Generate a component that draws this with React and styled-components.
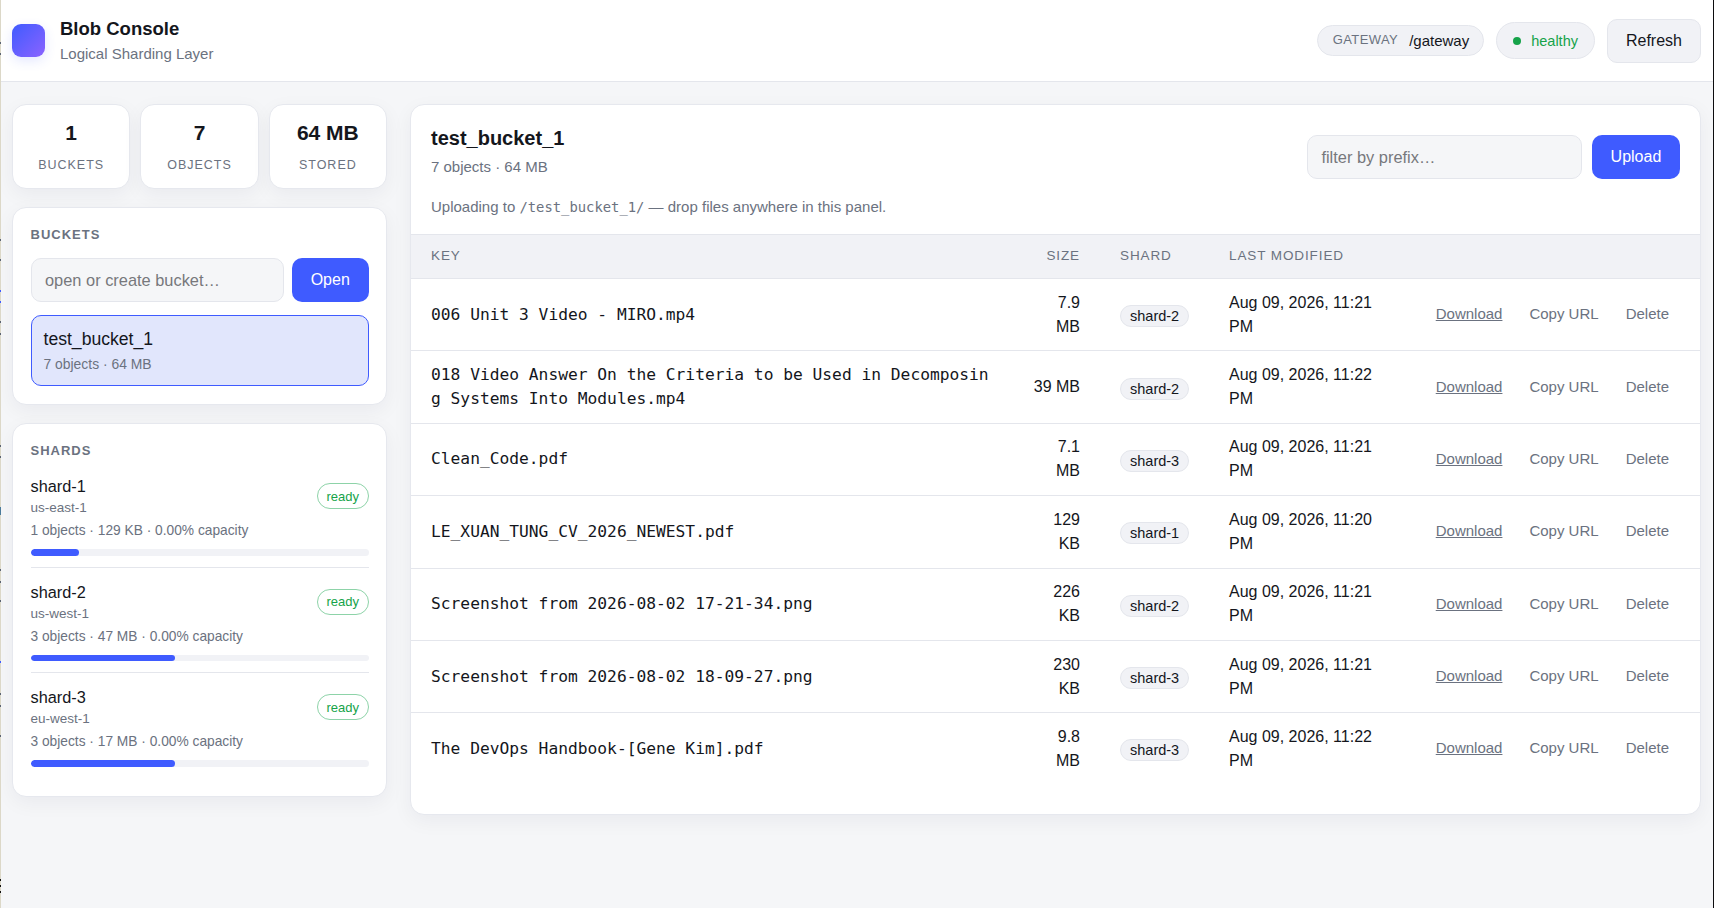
import React from 'react';
import styled, { createGlobalStyle } from 'styled-components';

const GlobalStyle = createGlobalStyle`
  * { box-sizing: border-box; }
  html, body { margin: 0; padding: 0; }
  body {
    background: #f5f6f8;
    color: #14161c;
    font-family: "Liberation Sans", Arial, sans-serif;
    font-size: 15px;
    min-height: 908px;
    overflow: hidden;
  }
`;

const shards = [
  { name: 'shard-1', region: 'us-east-1', meta: '1 objects · 129 KB · 0.00% capacity', pct: 14.4 },
  { name: 'shard-2', region: 'us-west-1', meta: '3 objects · 47 MB · 0.00% capacity', pct: 42.8 },
  { name: 'shard-3', region: 'eu-west-1', meta: '3 objects · 17 MB · 0.00% capacity', pct: 42.8 },
];

const objects = [
  { key: '006 Unit 3 Video - MIRO.mp4', size: '7.9 MB', shard: 'shard-2', date: 'Aug 09, 2026, 11:21 PM' },
  { key: '018 Video Answer On the Criteria to be Used in Decomposing Systems Into Modules.mp4', size: '39 MB', shard: 'shard-2', date: 'Aug 09, 2026, 11:22 PM' },
  { key: 'Clean_Code.pdf', size: '7.1 MB', shard: 'shard-3', date: 'Aug 09, 2026, 11:21 PM' },
  { key: 'LE_XUAN_TUNG_CV_2026_NEWEST.pdf', size: '129 KB', shard: 'shard-1', date: 'Aug 09, 2026, 11:20 PM' },
  { key: 'Screenshot from 2026-08-02 17-21-34.png', size: '226 KB', shard: 'shard-2', date: 'Aug 09, 2026, 11:21 PM' },
  { key: 'Screenshot from 2026-08-02 18-09-27.png', size: '230 KB', shard: 'shard-3', date: 'Aug 09, 2026, 11:21 PM' },
  { key: 'The DevOps Handbook-[Gene Kim].pdf', size: '9.8 MB', shard: 'shard-3', date: 'Aug 09, 2026, 11:22 PM' },
];

// bits of the window behind that show along the left edge of the capture
const edgeTicks = [
  { y: 42, c: '#5b6472' }, { y: 53, c: '#5b6472' }, { y: 239, c: '#5b6472' }, { y: 259, c: '#5b6472' },
  { y: 290, c: '#3f5bff' }, { y: 301, c: '#3f5bff' }, { y: 321, c: '#5b6472' }, { y: 333, c: '#5b6472' },
  { y: 445, c: '#5b6472' }, { y: 456, c: '#5b6472' }, { y: 507, c: '#4a7a9a', h: 8 }, { y: 569, c: '#5b6472' },
  { y: 581, c: '#5b6472' }, { y: 600, c: '#5b6472' }, { y: 661, c: '#3f5bff' }, { y: 693, c: '#5b6472' },
  { y: 705, c: '#5b6472' }, { y: 735, c: '#5b6472' }, { y: 879, c: '#111', h: 2 }, { y: 885, c: '#111', h: 2 },
  { y: 891, c: '#111', h: 2 },
];

const App = () => (
  <>
    <GlobalStyle />
    <Header>
      <Brand>
        <Logo />
        <div>
          <BrandName>Blob Console</BrandName>
          <BrandSub>Logical Sharding Layer</BrandSub>
        </div>
      </Brand>
      <HeaderRight>
        <GatewayPill>
          <GatewayLabel>GATEWAY</GatewayLabel>
          <span>/gateway</span>
        </GatewayPill>
        <StatusPill>
          <Dot />
          healthy
        </StatusPill>
        <GhostButton>Refresh</GhostButton>
      </HeaderRight>
    </Header>
    <Page>
      <Sidebar>
        <Stats>
          <Stat><StatValue>1</StatValue><StatLabel>BUCKETS</StatLabel></Stat>
          <Stat><StatValue>7</StatValue><StatLabel>OBJECTS</StatLabel></Stat>
          <Stat><StatValue>64 MB</StatValue><StatLabel>STORED</StatLabel></Stat>
        </Stats>
        <BucketsCard>
          <CardTitle>BUCKETS</CardTitle>
          <InputRow>
            <TextInput placeholder="open or create bucket…" />
            <PrimaryButton>Open</PrimaryButton>
          </InputRow>
          <BucketItem>
            <BucketName>test_bucket_1</BucketName>
            <BucketMeta>7 objects · 64 MB</BucketMeta>
          </BucketItem>
        </BucketsCard>
        <Card>
          <ShardsTitle>SHARDS</ShardsTitle>
          {shards.map((s, i) => (
            <Shard key={s.name} $last={i === shards.length - 1}>
              <ShardTop>
                <div>
                  <ShardName>{s.name}</ShardName>
                  <ShardRegion>{s.region}</ShardRegion>
                </div>
                <ReadyBadge>ready</ReadyBadge>
              </ShardTop>
              <ShardMeta>{s.meta}</ShardMeta>
              <Track>
                <Fill style={{ width: `${s.pct}%` }} />
              </Track>
            </Shard>
          ))}
        </Card>
      </Sidebar>
      <Main>
        <MainHead>
          <MainTop>
            <div>
              <MainTitle>test_bucket_1</MainTitle>
              <MainSub>7 objects · 64 MB</MainSub>
            </div>
            <MainTools>
              <FilterInput placeholder="filter by prefix…" />
              <PrimaryButton>Upload</PrimaryButton>
            </MainTools>
          </MainTop>
          <Hint>
            Uploading to <HintCode>/test_bucket_1/</HintCode> — drop files anywhere in this panel.
          </Hint>
        </MainHead>
        <Table>
          <thead>
            <tr>
              <Th $width="599px">KEY</Th>
              <Th $width="90px" $right>SIZE</Th>
              <Th $width="109px">SHARD</Th>
              <Th $width="200px">LAST MODIFIED</Th>
              <Th />
            </tr>
          </thead>
          <tbody>
            {objects.map((o, i) => {
              const last = i === objects.length - 1;
              return (
                <tr key={o.key}>
                  <KeyCell $last={last}>{o.key}</KeyCell>
                  <SizeCell $last={last}>{o.size}</SizeCell>
                  <Td $last={last}><ShardTag>{o.shard}</ShardTag></Td>
                  <Td $last={last}>{o.date}</Td>
                  <ActionsCell $last={last}>
                    <Actions>
                      <ActionLink>Download</ActionLink>
                      <ActionButton>Copy URL</ActionButton>
                      <ActionButton>Delete</ActionButton>
                    </Actions>
                  </ActionsCell>
                </tr>
              );
            })}
          </tbody>
        </Table>
      </Main>
    </Page>
    <LeftEdge>
      {edgeTicks.map(t => (
        <EdgeTick key={t.y} $y={t.y} $color={t.c} $h={t.h} />
      ))}
    </LeftEdge>
    <RightEdge />
  </>
);

const LeftEdge = styled.div`
  position: fixed;
  left: 0;
  top: 0;
  bottom: 0;
  width: 1px;
  background: #dcd8c8;
`;

const EdgeTick = styled.span`
  position: absolute;
  left: 0;
  top: ${p => p.$y}px;
  width: 1px;
  height: ${p => p.$h || 2}px;
  background: ${p => p.$color};
`;

const RightEdge = styled.div`
  position: fixed;
  right: 0;
  top: 0;
  bottom: 0;
  width: 1px;
  background: #0c0c0e;
`;

const Header = styled.header`
  height: 82px;
  background: #fff;
  border-bottom: 1px solid #e4e6ec;
  display: flex;
  align-items: center;
  justify-content: space-between;
  padding: 0 13px 0 12px;
`;

const Brand = styled.div`
  display: flex;
  align-items: center;
  gap: 15px;
`;

const Logo = styled.div`
  width: 33px;
  height: 33px;
  border-radius: 9px;
  background: linear-gradient(135deg, #3f5bff, #8b63ff);
  box-shadow: 0 4px 12px rgba(63, 91, 255, 0.14);
`;

const BrandName = styled.div`
  font-size: 18.5px;
  font-weight: 700;
  line-height: 22px;
  margin-top: 1px;
  margin-bottom: 4px;
`;

const BrandSub = styled.div`
  font-size: 15px;
  line-height: 20px;
  color: #6b7280;
`;

const HeaderRight = styled.div`
  display: flex;
  align-items: center;
  gap: 12px;
`;

const GatewayPill = styled.div`
  height: 31px;
  display: flex;
  align-items: center;
  gap: 11px;
  padding: 0 14px 0 15px;
  background: #f1f2f6;
  border: 1px solid #e4e6ec;
  border-radius: 999px;
  font-size: 15px;
`;

const GatewayLabel = styled.span`
  font-size: 13px;
  letter-spacing: 0.4px;
  color: #6b7280;
  margin-top: -2px;
`;

const StatusPill = styled.div`
  height: 37px;
  display: flex;
  align-items: center;
  gap: 10px;
  padding: 0 16px;
  background: #f1f2f6;
  border: 1px solid #e4e6ec;
  border-radius: 999px;
  font-size: 14.5px;
  color: #16a34a;
`;

const Dot = styled.span`
  width: 8px;
  height: 8px;
  border-radius: 50%;
  background: #16a34a;
`;

const GhostButton = styled.button`
  height: 44px;
  padding: 0 18px;
  background: #f1f2f6;
  border: 1px solid #e4e6ec;
  border-radius: 10px;
  color: #14161c;
  font: inherit;
  font-size: 16px;
`;

const Page = styled.div`
  display: grid;
  grid-template-columns: 375px 1291px;
  column-gap: 23px;
  padding: 22px 0 0 12px;
  align-items: start;
`;

const Sidebar = styled.aside`
  display: flex;
  flex-direction: column;
`;

const Stats = styled.div`
  display: grid;
  grid-template-columns: repeat(3, 1fr);
  gap: 10px;
  margin-bottom: 18px;
`;

const Stat = styled.div`
  height: 85px;
  background: #fff;
  border: 1px solid #e6e8ee;
  border-radius: 14px;
  box-shadow: 0 6px 20px rgba(20, 24, 50, 0.05);
  text-align: center;
  padding-top: 14.5px;
`;

const StatValue = styled.div`
  font-size: 21px;
  font-weight: 700;
  line-height: 26px;
`;

const StatLabel = styled.div`
  margin-top: 12px;
  font-size: 12.5px;
  letter-spacing: 1px;
  color: #6b7280;
`;

const Card = styled.section`
  background: #fff;
  border: 1px solid #e6e8ee;
  border-radius: 14px;
  box-shadow: 0 6px 20px rgba(20, 24, 50, 0.05);
  padding: 19px 17.5px 18px;
`;

const BucketsCard = styled(Card)`
  height: 198px;
  margin-bottom: 17.5px;
`;

const CardTitle = styled.div`
  font-size: 13px;
  font-weight: 700;
  letter-spacing: 1px;
  color: #6b7280;
  line-height: 16px;
  margin-bottom: 15px;
`;

const ShardsTitle = styled(CardTitle)`
  margin-bottom: 17.5px;
`;

const InputRow = styled.div`
  display: flex;
  gap: 8px;
  margin-bottom: 13px;
`;

const TextInput = styled.input`
  flex: 1;
  min-width: 0;
  height: 44px;
  padding: 0 13.5px;
  background: #f5f6f8;
  border: 1px solid #e4e6ec;
  border-radius: 10px;
  font: inherit;
  font-size: 16.4px;
  &::placeholder { color: #77787c; }
`;

const FilterInput = styled(TextInput)`
  flex: none;
  width: 275px;
`;

const PrimaryButton = styled.button`
  height: 44px;
  padding: 0 18.7px;
  background: #3f5bff;
  border: none;
  border-radius: 10px;
  color: #fff;
  font: inherit;
  font-size: 16px;
`;

const BucketItem = styled.div`
  height: 71px;
  padding: 12px;
  background: #e1e6fc;
  border: 1px solid #3f5bff;
  border-radius: 10px;
`;

const BucketName = styled.div`
  font-size: 17.6px;
  line-height: 22px;
  margin-bottom: 5px;
`;

const BucketMeta = styled.div`
  font-size: 13.9px;
  line-height: 18px;
  color: #6b7280;
`;

const Shard = styled.div`
  padding-bottom: ${p => (p.$last ? '0' : '11px')};
  margin-bottom: ${p => (p.$last ? '11px' : '14px')};
  border-bottom: ${p => (p.$last ? 'none' : '1px solid #e4e6ec')};
`;

const ShardTop = styled.div`
  display: flex;
  justify-content: space-between;
  align-items: center;
`;

const ShardName = styled.div`
  font-size: 16.3px;
  line-height: 20px;
`;

const ShardRegion = styled.div`
  margin-top: 2px;
  font-size: 13.5px;
  line-height: 20px;
  color: #6b7280;
`;

const ReadyBadge = styled.span`
  height: 26px;
  margin-bottom: 2px;
  padding: 0 8.5px;
  display: flex;
  align-items: center;
  font-size: 13px;
  color: #16a34a;
  border: 1px solid #8dd3a8;
  border-radius: 999px;
`;

const ShardMeta = styled.div`
  margin-top: 3px;
  font-size: 13.75px;
  line-height: 20px;
  color: #6b7280;
`;

const Track = styled.div`
  margin-top: 8px;
  height: 6.5px;
  background: #f1f2f6;
  border-radius: 4px;
  overflow: hidden;
`;

const Fill = styled.div`
  height: 100%;
  background: #3f5bff;
  border-radius: 4px;
`;

const Main = styled.main`
  height: 711px;
  background: #fff;
  border: 1px solid #e6e8ee;
  border-radius: 14px;
  box-shadow: 0 6px 20px rgba(20, 24, 50, 0.05);
  overflow: hidden;
`;

const MainHead = styled.div`
  padding: 20.5px 20px 17.5px 20px;
`;

const MainTop = styled.div`
  display: flex;
  justify-content: space-between;
  align-items: flex-start;
`;

const MainTitle = styled.div`
  font-size: 20px;
  font-weight: 700;
  line-height: 24px;
`;

const MainSub = styled.div`
  margin-top: 7px;
  font-size: 15px;
  line-height: 20px;
  color: #6b7280;
`;

const MainTools = styled.div`
  display: flex;
  gap: 10px;
  margin-top: 9.5px;
`;

const Hint = styled.div`
  margin-top: 17.5px;
  font-size: 15px;
  line-height: 20px;
  color: #6b7280;
`;

const HintCode = styled.code`
  font-family: "DejaVu Sans Mono", monospace;
  font-size: 13.85px;
`;

const Table = styled.table`
  width: 100%;
  border-collapse: collapse;
  table-layout: fixed;
`;

const Th = styled.th`
  width: ${p => p.$width || 'auto'};
  height: 44px;
  padding: 0 20px 2px;
  background: #f1f2f6;
  border-top: 1px solid #e4e6ec;
  border-bottom: 1px solid #e4e6ec;
  font-size: 13.5px;
  font-weight: 400;
  letter-spacing: 0.9px;
  color: #6b7280;
  text-align: ${p => (p.$right ? 'right' : 'left')};
`;

const Td = styled.td`
  padding: 11.7px 20px;
  border-bottom: ${p => (p.$last ? 'none' : '1px solid #e4e6ec')};
  font-size: 16px;
  line-height: 24px;
`;

const KeyCell = styled(Td)`
  font-family: "DejaVu Sans Mono", monospace;
  font-size: 16.25px;
  word-break: break-all;
`;

const SizeCell = styled(Td)`
  text-align: right;
`;

const ShardTag = styled.span`
  display: inline-block;
  padding: 1px 9px;
  background: #f1f2f6;
  border: 1px solid #e4e6ec;
  border-radius: 999px;
  font-size: 14.5px;
  line-height: 18px;
  white-space: nowrap;
  vertical-align: -2px;
`;

const ActionsCell = styled(Td)`
  padding: 0 31px 0 0;
`;

const Actions = styled.div`
  display: flex;
  justify-content: flex-end;
  gap: 27px;
  margin-top: -1px;
  font-size: 15px;
  color: #6b7280;
`;

const ActionLink = styled.a`
  text-decoration: underline;
`;

const ActionButton = styled.span``;

export default App;
